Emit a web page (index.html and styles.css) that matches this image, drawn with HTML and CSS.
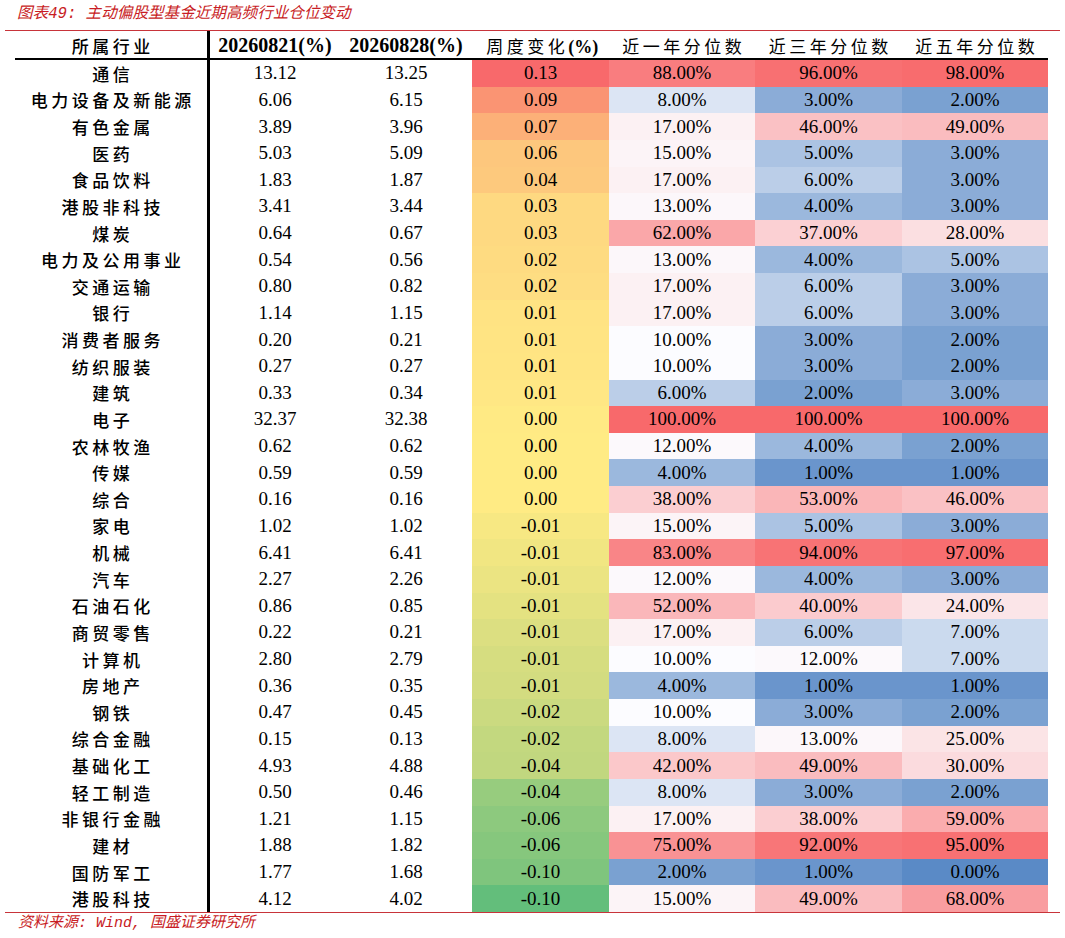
FILE: index.html
```html
<!DOCTYPE html>
<html lang="zh-CN">
<head>
<meta charset="utf-8">
<title>主动偏股型基金近期高频行业仓位变动</title>
<link rel="stylesheet" href="styles.css">
</head>
<body>
<div class="figure">
  <div class="title">图表49: 主动偏股型基金近期高频行业仓位变动</div>
  <div class="sheet">
    <table class="grid">
      <thead>
        <tr>
          <th class="h-name">所属行业</th>
          <th class="h-date w2">20260821(%)</th>
          <th class="h-date w3">20260828(%)</th>
          <th class="h-cn w4">周度变化<span class="paren">(%)</span></th>
          <th class="h-cn w5">近一年分位数</th>
          <th class="h-cn w6">近三年分位数</th>
          <th class="h-cn w7">近五年分位数</th>
        </tr>
      </thead>
      <tbody>
        <tr><td class="name">通信</td><td class="num">13.12</td><td class="num">13.25</td><td class="num" style="background:#F8696B">0.13</td><td class="num" style="background:#F97D7F">88.00%</td><td class="num" style="background:#F87072">96.00%</td><td class="num" style="background:#F86C6E">98.00%</td></tr>
        <tr><td class="name">电力设备及新能源</td><td class="num">6.06</td><td class="num">6.15</td><td class="num" style="background:#FA9473">0.09</td><td class="num" style="background:#DCE5F4">8.00%</td><td class="num" style="background:#8BACD7">3.00%</td><td class="num" style="background:#7AA1D1">2.00%</td></tr>
        <tr><td class="name">有色金属</td><td class="num">3.89</td><td class="num">3.96</td><td class="num" style="background:#FCB078">0.07</td><td class="num" style="background:#FCF1F3">17.00%</td><td class="num" style="background:#FAC1C4">46.00%</td><td class="num" style="background:#FABCBF">49.00%</td></tr>
        <tr><td class="name">医药</td><td class="num">5.03</td><td class="num">5.09</td><td class="num" style="background:#FDC77D">0.06</td><td class="num" style="background:#FCF4F7">15.00%</td><td class="num" style="background:#ABC3E3">5.00%</td><td class="num" style="background:#8BACD7">3.00%</td></tr>
        <tr><td class="name">食品饮料</td><td class="num">1.83</td><td class="num">1.87</td><td class="num" style="background:#FDC97D">0.04</td><td class="num" style="background:#FCF1F3">17.00%</td><td class="num" style="background:#BBCEE8">6.00%</td><td class="num" style="background:#8BACD7">3.00%</td></tr>
        <tr><td class="name">港股非科技</td><td class="num">3.41</td><td class="num">3.44</td><td class="num" style="background:#FED981">0.03</td><td class="num" style="background:#FCF7FA">13.00%</td><td class="num" style="background:#9BB8DD">4.00%</td><td class="num" style="background:#8BACD7">3.00%</td></tr>
        <tr><td class="name">煤炭</td><td class="num">0.64</td><td class="num">0.67</td><td class="num" style="background:#FED981">0.03</td><td class="num" style="background:#FAA7A9">62.00%</td><td class="num" style="background:#FBD0D3">37.00%</td><td class="num" style="background:#FBDFE1">28.00%</td></tr>
        <tr><td class="name">电力及公用事业</td><td class="num">0.54</td><td class="num">0.56</td><td class="num" style="background:#FEDB81">0.02</td><td class="num" style="background:#FCF7FA">13.00%</td><td class="num" style="background:#9BB8DD">4.00%</td><td class="num" style="background:#ABC3E3">5.00%</td></tr>
        <tr><td class="name">交通运输</td><td class="num">0.80</td><td class="num">0.82</td><td class="num" style="background:#FEDD82">0.02</td><td class="num" style="background:#FCF1F3">17.00%</td><td class="num" style="background:#BBCEE8">6.00%</td><td class="num" style="background:#8BACD7">3.00%</td></tr>
        <tr><td class="name">银行</td><td class="num">1.14</td><td class="num">1.15</td><td class="num" style="background:#FFE383">0.01</td><td class="num" style="background:#FCF1F3">17.00%</td><td class="num" style="background:#BBCEE8">6.00%</td><td class="num" style="background:#8BACD7">3.00%</td></tr>
        <tr><td class="name">消费者服务</td><td class="num">0.20</td><td class="num">0.21</td><td class="num" style="background:#FFE483">0.01</td><td class="num" style="background:#FCFCFF">10.00%</td><td class="num" style="background:#8BACD7">3.00%</td><td class="num" style="background:#7AA1D1">2.00%</td></tr>
        <tr><td class="name">纺织服装</td><td class="num">0.27</td><td class="num">0.27</td><td class="num" style="background:#FFE583">0.01</td><td class="num" style="background:#FCFCFF">10.00%</td><td class="num" style="background:#8BACD7">3.00%</td><td class="num" style="background:#7AA1D1">2.00%</td></tr>
        <tr><td class="name">建筑</td><td class="num">0.33</td><td class="num">0.34</td><td class="num" style="background:#FFE784">0.01</td><td class="num" style="background:#BBCEE8">6.00%</td><td class="num" style="background:#7AA1D1">2.00%</td><td class="num" style="background:#8BACD7">3.00%</td></tr>
        <tr><td class="name">电子</td><td class="num">32.37</td><td class="num">32.38</td><td class="num" style="background:#FFEA84">0.00</td><td class="num" style="background:#F8696B">100.00%</td><td class="num" style="background:#F8696B">100.00%</td><td class="num" style="background:#F8696B">100.00%</td></tr>
        <tr><td class="name">农林牧渔</td><td class="num">0.62</td><td class="num">0.62</td><td class="num" style="background:#FFEB84">0.00</td><td class="num" style="background:#FCF9FC">12.00%</td><td class="num" style="background:#9BB8DD">4.00%</td><td class="num" style="background:#7AA1D1">2.00%</td></tr>
        <tr><td class="name">传媒</td><td class="num">0.59</td><td class="num">0.59</td><td class="num" style="background:#FFEB84">0.00</td><td class="num" style="background:#9BB8DD">4.00%</td><td class="num" style="background:#6A95CC">1.00%</td><td class="num" style="background:#6A95CC">1.00%</td></tr>
        <tr><td class="name">综合</td><td class="num">0.16</td><td class="num">0.16</td><td class="num" style="background:#FFEB84">0.00</td><td class="num" style="background:#FBCED1">38.00%</td><td class="num" style="background:#FAB6B8">53.00%</td><td class="num" style="background:#FAC1C4">46.00%</td></tr>
        <tr><td class="name">家电</td><td class="num">1.02</td><td class="num">1.02</td><td class="num" style="background:#F7E883">-0.01</td><td class="num" style="background:#FCF4F7">15.00%</td><td class="num" style="background:#ABC3E3">5.00%</td><td class="num" style="background:#8BACD7">3.00%</td></tr>
        <tr><td class="name">机械</td><td class="num">6.41</td><td class="num">6.41</td><td class="num" style="background:#F1E682">-0.01</td><td class="num" style="background:#F98587">83.00%</td><td class="num" style="background:#F87375">94.00%</td><td class="num" style="background:#F86E70">97.00%</td></tr>
        <tr><td class="name">汽车</td><td class="num">2.27</td><td class="num">2.26</td><td class="num" style="background:#EBE482">-0.01</td><td class="num" style="background:#FCF9FC">12.00%</td><td class="num" style="background:#9BB8DD">4.00%</td><td class="num" style="background:#8BACD7">3.00%</td></tr>
        <tr><td class="name">石油石化</td><td class="num">0.86</td><td class="num">0.85</td><td class="num" style="background:#E4E281">-0.01</td><td class="num" style="background:#FAB7BA">52.00%</td><td class="num" style="background:#FBCBCE">40.00%</td><td class="num" style="background:#FBE5E8">24.00%</td></tr>
        <tr><td class="name">商贸零售</td><td class="num">0.22</td><td class="num">0.21</td><td class="num" style="background:#DCDF81">-0.01</td><td class="num" style="background:#FCF1F3">17.00%</td><td class="num" style="background:#BBCEE8">6.00%</td><td class="num" style="background:#CBDAEE">7.00%</td></tr>
        <tr><td class="name">计算机</td><td class="num">2.80</td><td class="num">2.79</td><td class="num" style="background:#D6DD80">-0.01</td><td class="num" style="background:#FCFCFF">10.00%</td><td class="num" style="background:#FCF9FC">12.00%</td><td class="num" style="background:#CBDAEE">7.00%</td></tr>
        <tr><td class="name">房地产</td><td class="num">0.36</td><td class="num">0.35</td><td class="num" style="background:#D3DC80">-0.01</td><td class="num" style="background:#9BB8DD">4.00%</td><td class="num" style="background:#6A95CC">1.00%</td><td class="num" style="background:#6A95CC">1.00%</td></tr>
        <tr><td class="name">钢铁</td><td class="num">0.47</td><td class="num">0.45</td><td class="num" style="background:#CBDA80">-0.02</td><td class="num" style="background:#FCFCFF">10.00%</td><td class="num" style="background:#8BACD7">3.00%</td><td class="num" style="background:#7AA1D1">2.00%</td></tr>
        <tr><td class="name">综合金融</td><td class="num">0.15</td><td class="num">0.13</td><td class="num" style="background:#C3D87F">-0.02</td><td class="num" style="background:#DCE5F4">8.00%</td><td class="num" style="background:#FCF7FA">13.00%</td><td class="num" style="background:#FBE4E6">25.00%</td></tr>
        <tr><td class="name">基础化工</td><td class="num">4.93</td><td class="num">4.88</td><td class="num" style="background:#C1D77F">-0.04</td><td class="num" style="background:#FBC8CA">42.00%</td><td class="num" style="background:#FABCBF">49.00%</td><td class="num" style="background:#FBDBDE">30.00%</td></tr>
        <tr><td class="name">轻工制造</td><td class="num">0.50</td><td class="num">0.46</td><td class="num" style="background:#97CC7E">-0.04</td><td class="num" style="background:#DCE5F4">8.00%</td><td class="num" style="background:#8BACD7">3.00%</td><td class="num" style="background:#7AA1D1">2.00%</td></tr>
        <tr><td class="name">非银行金融</td><td class="num">1.21</td><td class="num">1.15</td><td class="num" style="background:#8DC97E">-0.06</td><td class="num" style="background:#FCF1F3">17.00%</td><td class="num" style="background:#FBCED1">38.00%</td><td class="num" style="background:#FAACAE">59.00%</td></tr>
        <tr><td class="name">建材</td><td class="num">1.88</td><td class="num">1.82</td><td class="num" style="background:#86C77D">-0.06</td><td class="num" style="background:#F99294">75.00%</td><td class="num" style="background:#F87678">92.00%</td><td class="num" style="background:#F87173">95.00%</td></tr>
        <tr><td class="name">国防军工</td><td class="num">1.77</td><td class="num">1.68</td><td class="num" style="background:#7FC57D">-0.10</td><td class="num" style="background:#7AA1D1">2.00%</td><td class="num" style="background:#6A95CC">1.00%</td><td class="num" style="background:#5A8AC6">0.00%</td></tr>
        <tr><td class="name">港股科技</td><td class="num">4.12</td><td class="num">4.02</td><td class="num" style="background:#63BE7B">-0.10</td><td class="num" style="background:#FCF4F7">15.00%</td><td class="num" style="background:#FABCBF">49.00%</td><td class="num" style="background:#F99DA0">68.00%</td></tr>
      </tbody>
    </table>
  </div>
  <div class="source">资料来源: Wind, 国盛证券研究所</div>
</div>
</body>
</html>
```
FILE: styles.css
```css
html, body {
  margin: 0;
  padding: 0;
  background: #ffffff;
}

.figure {
  width: 1055px;
  margin-left: 5px;
}

.title {
  box-sizing: border-box;
  height: 30px;
  padding-top: 2px;
  line-height: 24px;
  padding-left: 12px;
  color: #c81c24;
  font-size: 15.6px;
  font-style: italic;
  font-family: "Liberation Mono", "Noto Sans CJK SC", monospace;
  white-space: nowrap;
}

.sheet {
  border-top: 1px solid #c8343a;
  border-bottom: 1px solid #c8343a;
  padding: 0 12px 0 10px;
}

.grid {
  border-collapse: separate;
  border-spacing: 0;
  table-layout: fixed;
  width: 1033px;
  color: #000000;
}

.grid th,
.grid td {
  box-sizing: border-box;
  padding: 0;
  text-align: center;
  vertical-align: middle;
  white-space: nowrap;
}

.grid thead th {
  height: 29px;
  padding-top: 1px;
  border-bottom: 2px solid #000000;
}

.h-name {
  width: 195px;
  border-right: 3px solid #000000;
  font-family: "Noto Sans CJK SC", sans-serif;
  font-weight: 500;
  font-size: 17px;
  letter-spacing: 3.5px;
  text-indent: 3.5px;
}

.w2 { width: 130px; }
.w3 { width: 132px; }
.w4 { width: 137px; }
.w5 { width: 146px; }
.w6 { width: 147px; }
.w7 { width: 146px; }

.h-date {
  font-family: "Liberation Serif", serif;
  font-weight: 700;
  font-size: 20px;
}

.h-cn {
  font-family: "Noto Sans CJK SC", sans-serif;
  font-weight: 400;
  font-size: 17px;
  letter-spacing: 3.5px;
  text-indent: 3.5px;
}

.paren {
  font-family: "Liberation Serif", serif;
  font-weight: 700;
  font-size: 18px;
  letter-spacing: 0;
}

.grid tbody td {
  height: 26.625px;
}

.name {
  border-right: 3px solid #000000;
  font-family: "Noto Sans CJK SC", sans-serif;
  font-weight: 500;
  font-size: 17px;
  letter-spacing: 3.5px;
  text-indent: 3.5px;
}

.num {
  font-family: "Liberation Serif", serif;
  font-size: 19px;
  line-height: 20px;
}

.source {
  box-sizing: border-box;
  height: 24px;
  padding-top: 1px;
  line-height: 20px;
  padding-left: 13px;
  color: #c81c24;
  font-size: 15px;
  font-style: italic;
  font-family: "Liberation Mono", "Noto Sans CJK SC", monospace;
  white-space: nowrap;
}
```
